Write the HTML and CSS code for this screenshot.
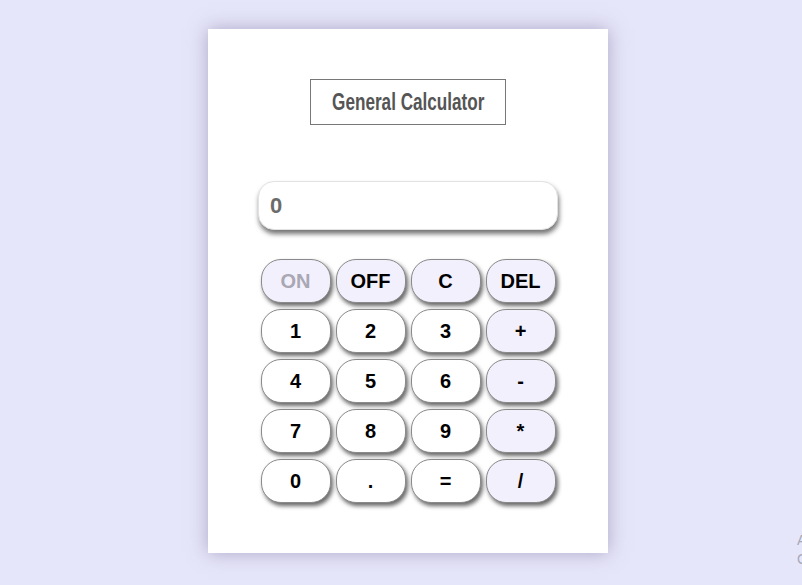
FILE: index.html
```html
<!DOCTYPE html>
<html lang="en">
<head>
<meta charset="utf-8">
<title>General Calculator</title>
<link rel="stylesheet" href="styles.css">
</head>
<body>
<main class="card">
  <div class="title-box"><span class="title-text">General Calculator</span></div>
  <div class="display">0</div>
  <div class="keys">
    <button class="key op disabled">ON</button>
    <button class="key op">OFF</button>
    <button class="key op">C</button>
    <button class="key op">DEL</button>
    <button class="key">1</button>
    <button class="key">2</button>
    <button class="key">3</button>
    <button class="key op">+</button>
    <button class="key">4</button>
    <button class="key">5</button>
    <button class="key">6</button>
    <button class="key op">-</button>
    <button class="key">7</button>
    <button class="key">8</button>
    <button class="key">9</button>
    <button class="key op">*</button>
    <button class="key">0</button>
    <button class="key">.</button>
    <button class="key">=</button>
    <button class="key op">/</button>
  </div>
</main>
<div class="watermark"><div class="wm-inner"><div>Activate Windows</div><div>Go to Settings to activate Windows.</div></div></div>
</body>
</html>
```
FILE: styles.css
```css
html, body {
  margin: 0;
  padding: 0;
}
body {
  background: #e6e6fa;
  height: 585px;
  overflow: hidden;
  font-family: "Liberation Sans", Arial, sans-serif;
}
.card {
  box-sizing: border-box;
  width: 400px;
  height: 524px;
  margin: 29px 0 0 208px;
  background: #ffffff;
  box-shadow: 0 0 18px rgba(115, 105, 145, 0.5);
  display: flex;
  flex-direction: column;
  align-items: center;
  padding-top: 50px;
}
.title-box {
  box-sizing: border-box;
  width: 196px;
  height: 46px;
  border: 1px solid #777;
  display: flex;
  align-items: center;
  justify-content: center;
  color: #555;
}
.title-text {
  display: inline-block;
  font-family: "Liberation Sans", Arial, sans-serif;
  font-weight: bold;
  font-size: 23px;
  white-space: nowrap;
  transform: scaleX(0.745);
  margin-top: 1px;
}
.display {
  box-sizing: border-box;
  width: 300px;
  height: 49px;
  margin-top: 56px;
  border: 1px solid #e2e2e2;
  border-radius: 16px;
  background: #fff;
  box-shadow: 1px 4px 5px rgba(0, 0, 0, 0.55);
  color: #6b6b6b;
  font-weight: bold;
  font-size: 22px;
  line-height: 47px;
  padding-left: 11px;
}
.keys {
  margin-top: 29px;
  display: grid;
  grid-template-columns: repeat(4, 70px);
  grid-auto-rows: 44px;
  column-gap: 5px;
  row-gap: 6px;
}
.key {
  box-sizing: border-box;
  border: 1px solid #8a8a8a;
  border-radius: 20px;
  background: #ffffff;
  box-shadow: 2px 3px 4px rgba(0, 0, 0, 0.6);
  font-family: "Liberation Sans", Arial, sans-serif;
  font-weight: bold;
  font-size: 20px;
  color: #000;
  padding: 0;
}
.key.op {
  background: #f2f0fd;
}
.key.disabled {
  color: #a9a7b3;
}
.watermark {
  position: absolute;
  left: 797px;
  top: 531px;
  width: 5px;
  height: 40px;
  overflow: hidden;
}
.wm-inner {
  width: 300px;
  color: #a8a8b8;
  font-size: 14px;
  line-height: 19px;
  white-space: nowrap;
}
```
